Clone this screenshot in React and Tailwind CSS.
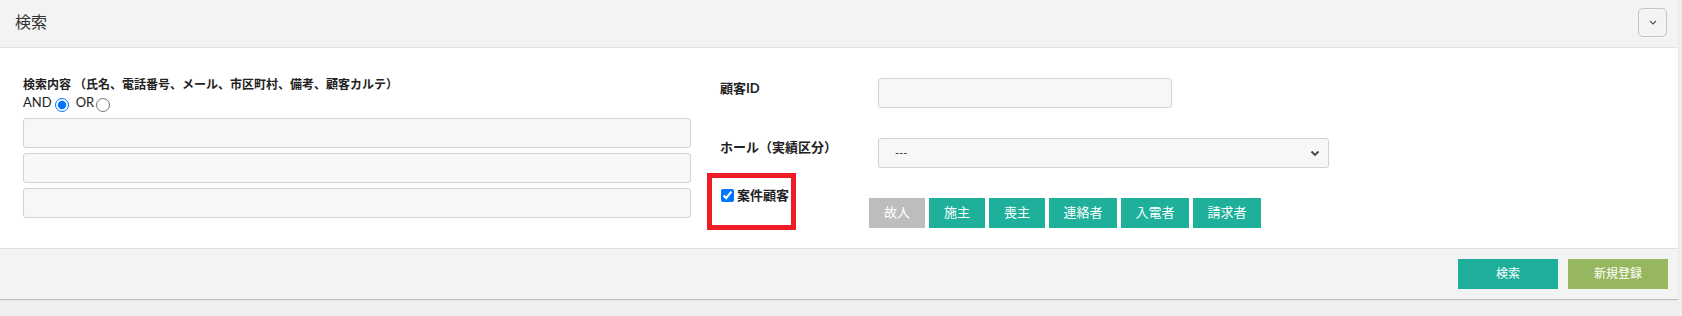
import { useState } from "react";

const FONT = { fontFamily: '"Lato", "Noto Sans CJK JP", sans-serif' };

const ROLE_BUTTONS = [
  { label: "故人", w: "w-[56px]", off: true },
  { label: "施主", w: "w-[56px]" },
  { label: "喪主", w: "w-[56px]" },
  { label: "連絡者", w: "w-[68px]" },
  { label: "入電者", w: "w-[68px]" },
  { label: "請求者", w: "w-[68px]" },
];

export default function App() {
  const [mode, setMode] = useState("and");
  const [isCase, setIsCase] = useState(true);

  return (
    <div className="w-full h-[316px] bg-[#efefef] text-[#222]" style={FONT}>
      <div className="w-[1678px] bg-white shadow-[0_1px_1px_rgba(0,0,0,0.2)]">
        {/* header */}
        <div className="h-[48px] bg-[#f3f3f3] border-b border-[#e2e2e2] flex items-center justify-between pl-[15px] pr-[11px]">
          <h2 className="text-[16px] text-[#333] font-normal pb-[3px]">検索</h2>
          <button className="w-[29px] h-[29px] mb-[2px] rounded-[5px] border border-[#c4c4c4] flex items-center justify-center">
            <svg width="8" height="5" viewBox="0 0 8 5" fill="none">
              <path d="M1 1l3 3 3-3" stroke="#555" strokeWidth="1.2" />
            </svg>
          </button>
        </div>

        {/* body */}
        <div className="h-[200px] flex">
          <div className="w-[668px] ml-[23px] pt-[28px]">
            <div className="text-[12px] font-bold leading-[18px] text-[#222]">
              検索内容 （氏名、電話番号、メール、市区町村、備考、顧客カルテ）
            </div>
            <div className="flex items-center h-[18px] text-[13px] text-[#222]">
              <span>AND</span>
              <input
                type="radio"
                className="w-[14px] h-[14px] m-0 ml-[3px] mt-[3px]"
                checked={mode === "and"}
                onChange={() => setMode("and")}
              />
              <span className="ml-[7px]">OR</span>
              <input
                type="radio"
                className="w-[14px] h-[14px] m-0 ml-[2px] mt-[3px]"
                checked={mode === "or"}
                onChange={() => setMode("or")}
              />
            </div>
            <div className="flex flex-col gap-[5px] mt-[6px]">
              {[0, 1, 2].map((i) => (
                <input
                  key={i}
                  className="h-[30px] w-full bg-[#f7f7f7] border border-[#d2d2d2] rounded-[3px]"
                />
              ))}
            </div>
          </div>

          <div className="ml-[29px] pt-[30px] flex flex-col">
            <div className="flex h-[30px]">
              <label className="w-[158px] text-[13px] font-bold pt-[1px]">顧客ID</label>
              <input className="w-[294px] h-[30px] bg-[#f7f7f7] border border-[#d2d2d2] rounded-[3px]" />
            </div>
            <div className="flex h-[30px] mt-[30px]">
              <label className="w-[158px] text-[13px] font-bold">ホール（実績区分）</label>
              <div className="relative w-[451px] h-[30px] bg-[#f7f7f7] border border-[#d2d2d2] rounded-[3px] flex items-center pl-[16px] text-[11px] text-[#333]">
                ---
                <svg className="absolute right-[8px] top-[11px]" width="10" height="7" viewBox="0 0 10 7" fill="none">
                  <path d="M1.5 1.5l3.5 3.5 3.5-3.5" stroke="#444" strokeWidth="1.8" />
                </svg>
              </div>
            </div>
            <div className="flex mt-[5px]">
              <div className="ml-[-13px] w-[89px] h-[57px] border-[5px] border-[#ee1c25] pl-[9px] pt-[9px]">
                <label className="flex items-center gap-[3px] text-[13px] font-bold leading-[16px]">
                  <input
                    type="checkbox"
                    className="w-[13px] h-[13px] m-0"
                    checked={isCase}
                    onChange={(e) => setIsCase(e.target.checked)}
                  />
                  案件顧客
                </label>
              </div>
              <div className="flex gap-[4px] ml-[73px] mt-[25px]">
                {ROLE_BUTTONS.map((b) => (
                  <button
                    key={b.label}
                    className={`${b.w} h-[30px] text-[13px] text-white ${b.off ? "bg-[#bdbdbd]" : "bg-[#1eb09a]"}`}
                  >
                    {b.label}
                  </button>
                ))}
              </div>
            </div>
          </div>
        </div>

        {/* footer */}
        <div className="h-[51px] bg-[#f3f3f3] border-t border-[#dedede] flex items-center justify-end gap-[10px] pr-[10px]">
          <button className="w-[100px] h-[30px] bg-[#1daf9a] text-white text-[12px]">検索</button>
          <button className="w-[100px] h-[30px] bg-[#97b75e] text-white text-[12px]">新規登録</button>
        </div>
      </div>
    </div>
  );
}
